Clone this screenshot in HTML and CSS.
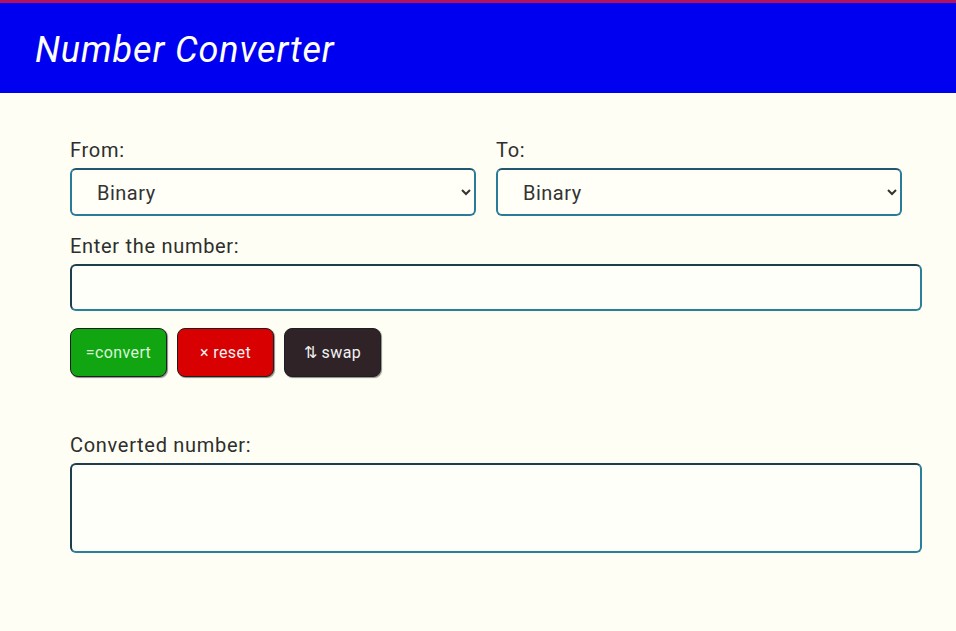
FILE: index.html
```html
<!DOCTYPE html>
<html lang="en">
<head>
<meta charset="utf-8">
<title>Number Converter</title>
<link rel="stylesheet" href="styles.css">
</head>
<body>
<header class="topbar">
  <h1 class="title">Number Converter</h1>
</header>
<main class="converter">
  <div class="row-selects">
    <div class="field">
      <label class="label" for="from">From:</label>
      <select id="from" class="select"><option>Binary</option><option>Decimal</option><option>Octal</option><option>Hexadecimal</option></select>
    </div>
    <div class="field">
      <label class="label" for="to">To:</label>
      <select id="to" class="select"><option>Binary</option><option>Decimal</option><option>Octal</option><option>Hexadecimal</option></select>
    </div>
  </div>
  <div class="field">
    <label class="label" for="num">Enter the number:</label>
    <input id="num" class="input" type="text">
  </div>
  <div class="buttons">
    <button class="btn btn-convert">=convert</button>
    <button class="btn btn-reset">× reset</button>
    <button class="btn btn-swap">⇅ swap</button>
  </div>
  <div class="field result">
    <label class="label" for="out">Converted number:</label>
    <textarea id="out" class="output"></textarea>
  </div>
</main>
</body>
</html>
```

FILE: styles.css
```css
* { box-sizing: border-box; }
html, body { margin: 0; padding: 0; }
body {
  background: #fefef4;
  font-family: Roboto, "Liberation Sans", sans-serif;
  color: #222;
  height: 631px;
}
.topbar {
  background: #0000f0;
  border-top: 3px solid #b5125e;
  height: 93px;
  display: flex;
  align-items: center;
  padding-left: 35px;
}
.title {
  margin: 0;
  font-weight: 400;
  font-style: italic;
  font-size: 36px;
  color: #ffffff;
  letter-spacing: 0.9px;
  padding-top: 4px;
}
.converter {
  padding: 46px 34px 0 70px;
  width: 956px;
}
.row-selects {
  display: grid;
  grid-template-columns: 1fr 1fr;
}
.field {
  display: flex;
  flex-direction: column;
}
.label {
  font-size: 20px;
  line-height: 22px;
  letter-spacing: 0.7px;
  color: #2e2e2e;
  margin-bottom: 7px;
}
.select {
  width: 95.4%;
  height: 48px;
  border: 2px solid #2a7b99;
  border-top-color: #20566e;
  border-radius: 6px;
  background: #fffff8;
  font-family: inherit;
  font-size: 20px;
  letter-spacing: 0.5px;
  color: #333;
  padding: 1px 10px 0 21px;
  margin-bottom: 19px;
}
.input {
  height: 47px;
  border: 2px solid #2a7f9a;
  border-top-color: #1c3f50;
  border-left-color: #1c3f50;
  border-radius: 6px;
  background: #fffffa;
  font-family: inherit;
  font-size: 20px;
  padding: 0 12px;
}
.buttons {
  display: flex;
  gap: 10px;
  margin-top: 17px;
}
.btn {
  width: 97px;
  height: 49px;
  border-radius: 8px;
  border: 1.5px solid #1e1e1e;
  font-family: inherit;
  font-size: 16px;
  letter-spacing: 0.4px;
  color: #f2f2f2;
  padding: 0;
  box-shadow: 1px 1px 1px rgba(0,0,0,0.45);
}
.btn-convert { background: #11a611; color: #d8f5d8; }
.btn-reset { background: #d80000; }
.btn-swap { background: #2f2327; }
.result { margin-top: 57px; }
.output {
  height: 90px;
  border: 2px solid #2a7f9a;
  border-top-color: #1c3f50;
  border-left-color: #1c3f50;
  border-radius: 6px;
  background: #fffffa;
  resize: none;
  font-family: inherit;
  font-size: 18px;
}
```
